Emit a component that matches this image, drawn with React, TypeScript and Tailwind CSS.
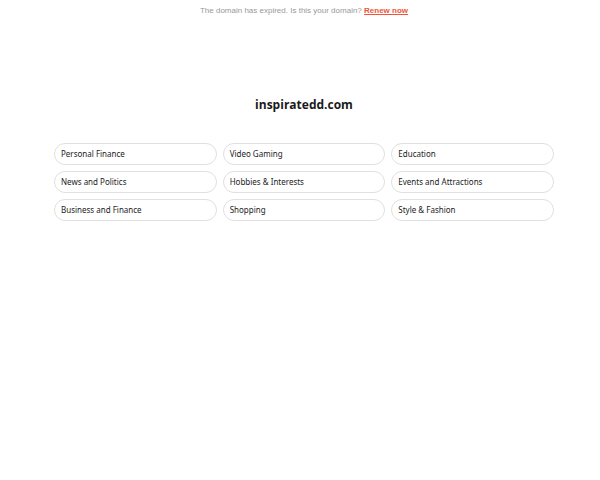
import React from "react";

const items = [
  "Personal Finance",
  "Video Gaming",
  "Education",
  "News and Politics",
  "Hobbies & Interests",
  "Events and Attractions",
  "Business and Finance",
  "Shopping",
  "Style & Fashion",
];

export default function App() {
  return (
    <div className="w-[600px] h-[480px] bg-white pl-[8px]">
      <div className="pt-[5px] text-center text-[8px] leading-[11px] text-[#999999] [font-family:'Liberation_Sans',Arial,sans-serif]">
        The domain has expired. Is this your domain?{" "}
        <a className="font-bold text-[#f0553a] underline">Renew now</a>
      </div>
      <div className="mt-[80px] text-center text-[12px] leading-[18px] font-bold text-[#1a1a1a] [font-family:'Open_Sans',sans-serif]">
        inspiratedd.com
      </div>
      <div className="mx-auto mt-[29px] grid w-[500px] grid-cols-3 gap-[6px] [font-family:'Noto_Sans',sans-serif]">
        {items.map((t) => (
          <div
            key={t}
            className="flex h-[22px] items-center rounded-full border border-[#e0e0e0] pl-[6px] pb-[1px] text-[8px] text-[#222222]"
          >
            {t}
          </div>
        ))}
      </div>
    </div>
  );
}
